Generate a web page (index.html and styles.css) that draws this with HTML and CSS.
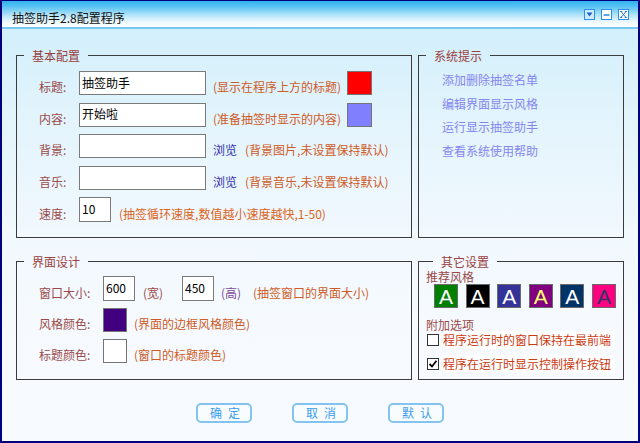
FILE: index.html
```html
<!DOCTYPE html>
<html lang="zh-CN">
<head>
<meta charset="utf-8">
<title>抽签助手2.8配置程序</title>
<link rel="stylesheet" href="styles.css">
</head>
<body>
<div class="window">
  <header class="titlebar">
    <span class="title">抽签助手2.8配置程序</span>
    <div class="winbtns">
      <span class="wbtn"><svg width="11" height="11" viewBox="0 0 11 11"><rect x="0.5" y="0.5" width="10" height="10" fill="#cfeafc" stroke="#2b8ff0"/><path d="M2.5 3.5 H8.5 L5.5 7.5 Z" fill="#1662cc"/></svg></span>
      <span class="wbtn"><svg width="11" height="11" viewBox="0 0 11 11"><rect x="0.5" y="0.5" width="10" height="10" fill="#fff" stroke="#2b8ff0"/><path d="M2.5 6 H8.5" stroke="#1f78e0" stroke-width="1.4"/></svg></span>
      <span class="wbtn"><svg width="11" height="11" viewBox="0 0 11 11"><rect x="0.5" y="0.5" width="10" height="10" fill="#fff" stroke="#2b8ff0"/><path d="M3 2.5 L8 8.5 M8 2.5 L3 8.5 M2.2 2.5 H4.2 M6.8 2.5 H8.8 M2.2 8.5 H4.2 M6.8 8.5 H8.8" stroke="#1f78e0" stroke-width="1"/></svg></span>
    </div>
  </header>
  <main class="content">
    <div class="panels">
      <fieldset class="group basic">
        <legend>基本配置</legend>
        <div class="rows">
          <div class="row">
            <span class="label">标题:</span>
            <input class="field" type="text" value="抽签助手">
            <span class="hint hint-fixed">(显示在程序上方的标题)</span>
            <span class="swatch sw-red"></span>
          </div>
          <div class="row">
            <span class="label">内容:</span>
            <input class="field" type="text" value="开始啦">
            <span class="hint hint-fixed">(准备抽签时显示的内容)</span>
            <span class="swatch sw-lilac"></span>
          </div>
          <div class="row">
            <span class="label">背景:</span>
            <input class="field" type="text" value="">
            <a class="browse" href="#">浏览</a>
            <span class="hint hint-after">(背景图片,未设置保持默认)</span>
          </div>
          <div class="row">
            <span class="label">音乐:</span>
            <input class="field" type="text" value="">
            <a class="browse" href="#">浏览</a>
            <span class="hint hint-after">(背景音乐,未设置保持默认)</span>
          </div>
          <div class="row row-tall">
            <span class="label">速度:</span>
            <input class="field num" type="text" value="10">
            <span class="hint hint-speed">(抽签循环速度,数值越小速度越快,1-50)</span>
          </div>
        </div>
      </fieldset>

      <fieldset class="group tips">
        <legend>系统提示</legend>
        <nav class="links">
          <a href="#">添加删除抽签名单</a>
          <a href="#">编辑界面显示风格</a>
          <a href="#">运行显示抽签助手</a>
          <a href="#">查看系统使用帮助</a>
        </nav>
      </fieldset>

      <fieldset class="group design">
        <legend>界面设计</legend>
        <div class="rows rows-design">
          <div class="row row-tall">
            <span class="label label-wide">窗口大小:</span>
            <input class="field num" type="text" value="600">
            <span class="unit unit-w">(宽)</span>
            <input class="field num" type="text" value="450">
            <span class="unit unit-h">(高)</span>
            <span class="hint">(抽签窗口的界面大小)</span>
          </div>
          <div class="row">
            <span class="label label-wide">风格颜色:</span>
            <span class="swatch sq sw-purple"></span>
            <span class="hint">(界面的边框风格颜色)</span>
          </div>
          <div class="row">
            <span class="label label-wide">标题颜色:</span>
            <span class="swatch sq sw-white"></span>
            <span class="hint">(窗口的标题颜色)</span>
          </div>
        </div>
      </fieldset>

      <fieldset class="group other">
        <legend>其它设置</legend>
        <div class="sub">推荐风格</div>
        <div class="styles">
          <span class="sty sty-green">A</span>
          <span class="sty sty-black">A</span>
          <span class="sty sty-indigo">A</span>
          <span class="sty sty-purple">A</span>
          <span class="sty sty-navy">A</span>
          <span class="sty sty-pink">A</span>
        </div>
        <div class="sub sub-opts">附加选项</div>
        <label class="opt opt-first">
          <span class="box"></span>
          <span class="opt-text">程序运行时的窗口保持在最前端</span>
        </label>
        <label class="opt opt-second">
          <span class="box"><svg width="10" height="10" viewBox="0 0 10 10"><path d="M1.5 5 L4 7.5 L8.5 1.8" fill="none" stroke="#000" stroke-width="1.8"/></svg></span>
          <span class="opt-text">程序在运行时显示控制操作按钮</span>
        </label>
      </fieldset>
    </div>

    <div class="actions">
      <button class="btn" type="button">确定</button>
      <button class="btn" type="button">取消</button>
      <button class="btn" type="button">默认</button>
    </div>
  </main>
</div>
</body>
</html>
```

FILE: styles.css
```css
* { box-sizing: border-box; }

html, body {
  margin: 0;
  padding: 0;
}

body {
  width: 640px;
  height: 443px;
  overflow: hidden;
  font-family: "Noto Sans CJK SC", "Microsoft YaHei", sans-serif;
  font-size: 12px;
  color: #000;
}

.window {
  width: 640px;
  height: 443px;
  border: 2px solid #00007c;
  border-top-width: 1px;
  display: flex;
  flex-direction: column;
  background: linear-gradient(to bottom, #cdeefb 0px, #e3f4fc 120px, #f1f8fe 230px, #f6fafe 330px, #f7fbff 100%);
}

/* ---------- title bar ---------- */
.titlebar {
  height: 28px;
  flex: none;
  display: flex;
  align-items: flex-end;
  justify-content: space-between;
  padding: 0 9px 1px 10px;
  background: linear-gradient(to bottom, #2fb1ef 0%, #62c6f3 25%, #b5e5fa 55%, #ecf8fe 80%, #ffffff 100%);
  border-bottom: 2px solid #74c8f3;
}

.title {
  line-height: 16px;
  color: #111;
}

.winbtns {
  align-self: flex-start;
  margin-top: 8px;
  display: flex;
  gap: 6px;
}

.wbtn {
  width: 11px;
  height: 11px;
  display: block;
}

.wbtn svg { display: block; }

/* ---------- content ---------- */
.content {
  flex: 1;
  padding: 18px 14px 0 14px;
  display: flex;
  flex-direction: column;
}

.panels {
  display: grid;
  grid-template-columns: 396px 206px;
  grid-template-rows: 191px 127px;
  column-gap: 6px;
  row-gap: 15px;
}

.group {
  margin: 0;
  padding: 0;
  border: 1px solid #3c3c3c;
  min-width: 0;
}

.group legend {
  margin-left: 7px;
  padding: 0 8px;
  line-height: 17px;
  color: #9a4040;
}

.rows {
  display: flex;
  flex-direction: column;
  gap: 7.5px;
  padding: 7px 0 0 22px;
}

.rows-design {
  gap: 7px;
  padding-top: 6px;
}

.row {
  display: flex;
  align-items: flex-end;
  height: 24px;
}

.row-tall { height: 25px; }

.label {
  width: 40px;
  flex: none;
  line-height: 16px;
  color: #9a4a4a;
}

.label-wide { width: 64px; }

.field {
  width: 127px;
  height: 24px;
  flex: none;
  margin: 0;
  padding: 0 2px 2px 2px;
  border: 1px solid #7a7a7a;
  background: #fff;
  font-family: inherit;
  font-size: 12px;
  color: #000;
  outline: none;
}

.field.num {
  width: 32px;
  height: 25px;
}

.hint {
  margin-left: 7px;
  line-height: 16px;
  color: #cf5a26;
  white-space: nowrap;
}

.hint-fixed {
  width: 134px;
  flex: none;
}

.hint-after { margin-left: 8px; }

.hint-speed {
  margin-left: 8px;
  color: #dc6420;
}

.browse {
  margin-left: 7px;
  line-height: 16px;
  color: #2f2fae;
  text-decoration: none;
}

.swatch {
  width: 25px;
  height: 24px;
  flex: none;
  border: 1px solid #757575;
}

.swatch.sq { width: 24px; }

.sw-red { background: #ff0000; }
.sw-lilac { background: #8080ff; }
.sw-purple { background: #400080; }
.sw-white { background: #ffffff; }

.unit {
  line-height: 16px;
  color: #9a4a4a;
  flex: none;
}

.unit-w {
  margin-left: 8px;
  width: 39px;
}

.unit-h {
  margin-left: 7px;
  width: 25px;
  color: #7a4a9a;
}

.unit-h + .hint { margin-left: 7px; }

/* ---------- tips ---------- */
.links {
  display: flex;
  flex-direction: column;
  gap: 7.5px;
  padding: 8px 0 0 23px;
}

.links a {
  line-height: 16px;
  color: #8585ef;
  text-decoration: none;
}

/* ---------- other settings ---------- */
.other { padding-left: 7px; }

.sub {
  line-height: 14px;
  color: #9a4a4a;
}

.sub-opts { margin-top: 10px; }

.styles {
  display: flex;
  gap: 7.6px;
  margin-left: 8px;
}

.sty {
  width: 24px;
  height: 24px;
  border: 1px solid #6a6a6a;
  display: flex;
  align-items: center;
  justify-content: center;
  font-family: "Liberation Sans", Arial, sans-serif;
  font-size: 21px;
  line-height: 1;
  color: #fff;
}

.sty-green { background: #008000; }
.sty-black { background: #000000; }
.sty-indigo { background: #333399; }
.sty-purple { background: #800080; color: #ffff66; }
.sty-navy { background: #003366; }
.sty-pink { background: #ff0080; color: #333366; }

.opt {
  display: flex;
  align-items: center;
  height: 18px;
}

.opt-first { margin-top: -1px; }
.opt-second { margin-top: 6px; }

.box {
  width: 12px;
  height: 12px;
  margin-left: 1px;
  flex: none;
  border: 1px solid #333;
  background: #fff;
  display: flex;
  align-items: center;
  justify-content: center;
}

.box svg { display: block; }

.opt-text {
  margin-left: 4px;
  width: 172px;
  height: 18px;
  line-height: 18px;
  background: #fff;
  color: #cc3a10;
  white-space: nowrap;
}

/* ---------- buttons ---------- */
.actions {
  display: flex;
  justify-content: center;
  gap: 40px;
  margin-top: 23px;
}

.btn {
  width: 56px;
  height: 20px;
  margin: 0;
  padding: 0 0 0 8px;
  border: 2px solid #82c3f2;
  border-radius: 5px;
  background: #f8fcff;
  color: #3a9cef;
  font-family: "Noto Sans CJK SC", sans-serif;
  font-size: 12px;
  line-height: 16px;
  letter-spacing: 6px;
  text-align: center;
}
```
